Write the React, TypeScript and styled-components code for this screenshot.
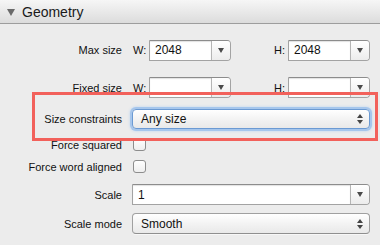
import * as React from "react";
import styled, { createGlobalStyle } from "styled-components";

const Global = createGlobalStyle`
    html, body {
        margin: 0;
        padding: 0;
        background: #ececec;
    }
    body {
        font-family: "Liberation Sans", Arial, sans-serif;
        font-size: 11px;
        color: #111;
    }
`;

const Panel = styled.div`
    width: 380px;
    height: 245px;
    background: #ececec;
    position: relative;
    overflow: hidden;
`;

const Header = styled.div`
    height: 23px;
    border-bottom: 1px solid #9d9d9d;
    background: linear-gradient(#f6f6f6, #dcdcdc);
    display: flex;
    align-items: center;
    padding-left: 7px;
    gap: 7px;
    font-size: 14px;
    color: #1a1a1a;
`;

const Triangle = styled.span`
    width: 0;
    height: 0;
    border-left: 4px solid transparent;
    border-right: 4px solid transparent;
    border-top: 7px solid #6a6a6a;
    margin-top: 1px;
`;

const Row = styled.div<{ top: number; h: number }>`
    display: flex;
    align-items: center;
    margin-top: ${p => p.top}px;
    height: ${p => p.h}px;
`;

const Label = styled.div`
    width: 132px;
    text-align: right;
    padding-right: 10px;
    box-sizing: border-box;
    flex: none;
    white-space: nowrap;
`;

const SubLabel = styled.span<{ w: number }>`
    width: ${p => p.w}px;
    flex: none;
    padding-left: 1px;
    box-sizing: border-box;
`;

const Spacer = styled.span<{ w: number }>`
    width: ${p => p.w}px;
    flex: none;
`;

const Combo = styled.div<{ w: number }>`
    width: ${p => p.w}px;
    height: 21px;
    box-sizing: border-box;
    display: flex;
    border: 1px solid #a3a3a3;
    border-top-color: #8c8c8c;
    border-radius: 0 4px 4px 0;
    overflow: hidden;
    flex: none;
`;

const Field = styled.div`
    flex: 1;
    background: #fff;
    display: flex;
    align-items: center;
    padding-left: 5px;
    font-size: 12px;
    box-shadow: inset 0 1px 1px rgba(0,0,0,0.12);
`;

const ComboButton = styled.div`
    width: 18px;
    flex: none;
    border-left: 1px solid #b5b5b5;
    background: linear-gradient(#ffffff, #ececec);
    display: flex;
    align-items: center;
    justify-content: center;
`;

const DownArrow = styled.span`
    width: 0;
    height: 0;
    border-left: 3.5px solid transparent;
    border-right: 3.5px solid transparent;
    border-top: 5px solid #4a4a4a;
`;

const Popup = styled.div<{ focused?: boolean }>`
    width: 238px;
    height: ${p => (p.focused ? 20 : 21)}px;
    box-sizing: border-box;
    flex: none;
    display: flex;
    align-items: center;
    justify-content: space-between;
    padding: 0 6px 0 8px;
    border: 1px solid ${p => (p.focused ? "#6b9ad3" : "#a0a0a0")};
    border-bottom-color: ${p => (p.focused ? "#6b9ad3" : "#8f8f8f")};
    border-radius: 4px;
    background: linear-gradient(#ffffff, #f1f1f1 60%, #e9e9e9);
    box-shadow: ${p => (p.focused ? "0 0 0 2px #a6c6ec, 0 0 3px 2px #b9d3f1" : "0 1px 0 rgba(255,255,255,0.6)")};
    font-size: 12px;
`;

const Stepper = styled.span`
    display: flex;
    flex-direction: column;
    gap: 2px;
    & > i {
        width: 0;
        height: 0;
        border-left: 3px solid transparent;
        border-right: 3px solid transparent;
    }
    & > i:first-child { border-bottom: 4px solid #444; }
    & > i:last-child { border-top: 4px solid #444; }
`;

const Check = styled.div`
    width: 13px;
    height: 13px;
    box-sizing: border-box;
    border: 1px solid #8d8d8d;
    border-radius: 3px;
    background: linear-gradient(#ffffff, #eeeeee);
    margin-left: 1px;
`;

const Highlight = styled.div`
    position: absolute;
    left: 32px;
    top: 92px;
    width: 346px;
    height: 49px;
    box-sizing: border-box;
    border: 3px solid #f2615b;
    pointer-events: none;
`;

const ComboBox = ({ value, w }: { value?: string; w: number }) => (
    <Combo w={w}>
        <Field>{value}</Field>
        <ComboButton><DownArrow /></ComboButton>
    </Combo>
);

const Select = ({ value, focused }: { value: string; focused?: boolean }) => (
    <Popup focused={focused}>
        <span>{value}</span>
        <Stepper><i /><i /></Stepper>
    </Popup>
);

const SizePair = ({ w, h }: { w?: string; h?: string }) => (
    <>
        <SubLabel w={17}>W:</SubLabel>
        <ComboBox w={82} value={w} />
        <Spacer w={42} />
        <SubLabel w={15}>H:</SubLabel>
        <ComboBox w={82} value={h} />
    </>
);

export default function App() {
    return (
        <Panel>
            <Global />
            <Header><Triangle />Geometry</Header>
            <Row top={15} h={22}>
                <Label>Max size</Label>
                <SizePair w="2048" h="2048" />
            </Row>
            <Row top={16} h={21}>
                <Label>Fixed size</Label>
                <SizePair />
            </Row>
            <Row top={11} h={20}>
                <Label>Size constraints</Label>
                <Select value="Any size" focused />
            </Row>
            <Row top={9} h={13}>
                <Label>Force squared</Label>
                <Check />
            </Row>
            <Row top={9} h={13}>
                <Label>Force word aligned</Label>
                <Check />
            </Row>
            <Row top={11} h={21}>
                <Label>Scale</Label>
                <ComboBox w={238} value="1" />
            </Row>
            <Row top={8} h={21}>
                <Label>Scale mode</Label>
                <Select value="Smooth" />
            </Row>
            <Highlight />
        </Panel>
    );
}
